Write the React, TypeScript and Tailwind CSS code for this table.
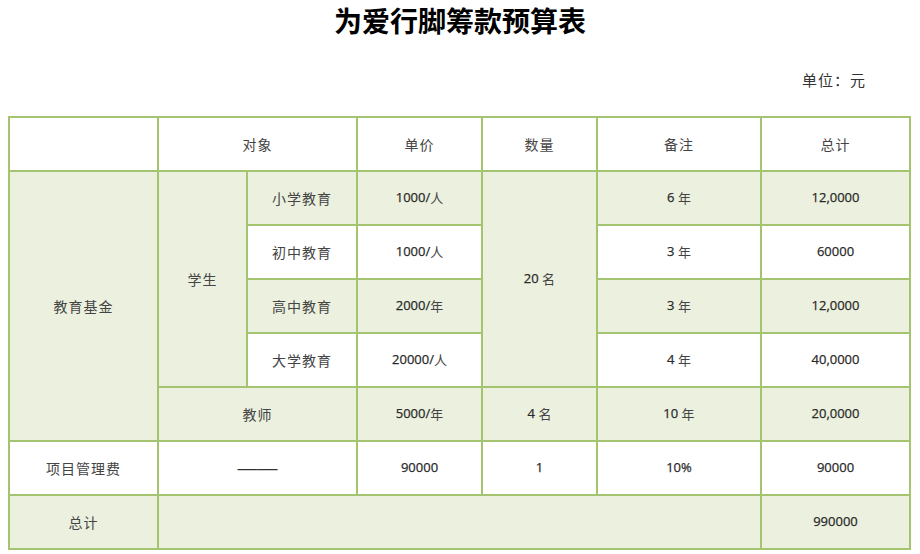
import React from "react";

const G = "bg-[#ebf1de]";
const W = "bg-white";

function Cell({
  children,
  bg,
  span = "",
  num = false,
}: {
  children?: React.ReactNode;
  bg: string;
  span?: string;
  num?: boolean;
}) {
  return (
    <div
      className={`${bg} ${span} flex items-center justify-center ${
        num
          ? "text-[13px] text-[#2a2a2a] [-webkit-text-stroke:0.25px_#2a2a2a] [font-family:'Open_Sans','Noto_Sans_CJK_SC',sans-serif]"
          : "text-[14px] tracking-[1px] text-[#444] [font-family:'Noto_Sans_CJK_SC',sans-serif]"
      }`}
    >
      {children}
    </div>
  );
}

function U({ children }: { children: React.ReactNode }) {
  return (
    <span className="text-[13px] text-[#444] [-webkit-text-stroke:0px] [font-family:'Noto_Sans_CJK_SC',sans-serif]">
      {children}
    </span>
  );
}

export default function App() {
  return (
    <div className="w-[920px] h-[554px] bg-white overflow-hidden [font-family:'Noto_Sans_CJK_SC',sans-serif]">
      <div className="pt-[3px] text-center text-[28px] leading-[34px] font-bold text-black">
        为爱行脚筹款预算表
      </div>
      <div className="mt-[33px] pr-[54px] text-right text-[15px] leading-[20px] tracking-[1px] text-[#333]">
        单位：元
      </div>
      <div className="mt-[26px] ml-[8px] w-fit grid grid-cols-[147px_87px_108px_123px_113px_162px_147px] grid-rows-[repeat(8,52px)] gap-[2px] p-[2px] bg-[#a5c470]">
        {/* header */}
        <Cell bg={W} />
        <Cell bg={W} span="col-span-2">对象</Cell>
        <Cell bg={W}>单价</Cell>
        <Cell bg={W}>数量</Cell>
        <Cell bg={W}>备注</Cell>
        <Cell bg={W}>总计</Cell>

        {/* row 1 */}
        <Cell bg={G} span="row-span-5">教育基金</Cell>
        <Cell bg={G} span="row-span-4">学生</Cell>
        <Cell bg={G}>小学教育</Cell>
        <Cell bg={G} num>1000/<U>人</U></Cell>
        <Cell bg={G} span="row-span-4" num>20&nbsp;<U>名</U></Cell>
        <Cell bg={G} num>6&nbsp;<U>年</U></Cell>
        <Cell bg={G} num>12,0000</Cell>

        {/* row 2 */}
        <Cell bg={W}>初中教育</Cell>
        <Cell bg={W} num>1000/<U>人</U></Cell>
        <Cell bg={W} num>3&nbsp;<U>年</U></Cell>
        <Cell bg={W} num>60000</Cell>

        {/* row 3 */}
        <Cell bg={G}>高中教育</Cell>
        <Cell bg={G} num>2000/<U>年</U></Cell>
        <Cell bg={G} num>3&nbsp;<U>年</U></Cell>
        <Cell bg={G} num>12,0000</Cell>

        {/* row 4 */}
        <Cell bg={W}>大学教育</Cell>
        <Cell bg={W} num>20000/<U>人</U></Cell>
        <Cell bg={W} num>4&nbsp;<U>年</U></Cell>
        <Cell bg={W} num>40,0000</Cell>

        {/* row 5 */}
        <Cell bg={G} span="col-span-2">教师</Cell>
        <Cell bg={G} num>5000/<U>年</U></Cell>
        <Cell bg={G} num>4&nbsp;<U>名</U></Cell>
        <Cell bg={G} num>10&nbsp;<U>年</U></Cell>
        <Cell bg={G} num>20,0000</Cell>

        {/* row 6 */}
        <Cell bg={W}>项目管理费</Cell>
        <Cell bg={W} span="col-span-2">
          <span className="text-[20px] tracking-[0px] leading-none text-[#333] [font-family:'Liberation_Sans',sans-serif]">——</span>
        </Cell>
        <Cell bg={W} num>90000</Cell>
        <Cell bg={W} num>1</Cell>
        <Cell bg={W} num>10%</Cell>
        <Cell bg={W} num>90000</Cell>

        {/* row 7 */}
        <Cell bg={G}>总计</Cell>
        <Cell bg={G} span="col-span-5" />
        <Cell bg={G} num>990000</Cell>
      </div>
    </div>
  );
}
